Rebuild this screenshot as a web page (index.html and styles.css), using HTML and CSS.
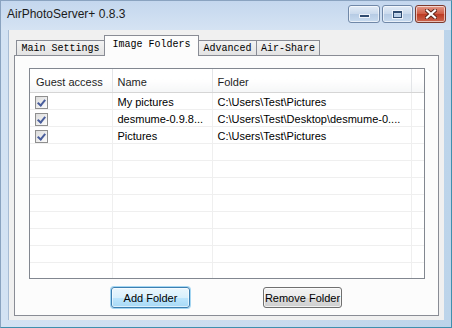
FILE: index.html
```html
<!DOCTYPE html>
<html lang="en">
<head>
<meta charset="utf-8"/>
<title>AirPhotoServer+ 0.8.3</title>
<link rel="stylesheet" href="styles.css">
</head>
<body>
<div class="window">
  <!-- Title bar -->
  <div class="titlebar">
    <span class="title">AirPhotoServer+ 0.8.3</span>
    <div class="caption-buttons">
      <div class="cap-btn cap-min"><span class="min-glyph"></span></div>
      <div class="cap-btn cap-max"><span class="max-glyph"></span></div>
      <div class="cap-btn cap-close">
        <svg width="12" height="10" viewBox="0 0 12 10">
          <path d="M2 1.5 L10 8.5 M10 1.5 L2 8.5" stroke="#5b2418" stroke-width="4" stroke-linecap="square"/>
          <path d="M2 1.5 L10 8.5 M10 1.5 L2 8.5" stroke="#ffffff" stroke-width="2.2" stroke-linecap="square"/>
        </svg>
      </div>
    </div>
  </div>

  <div class="client">
    <!-- Tabs -->
    <div class="tabs">
      <div class="tab tab-main">Main Settings</div>
      <div class="tab tab-images active">Image Folders</div>
      <div class="tab tab-adv">Advanced</div>
      <div class="tab tab-share">Air-Share</div>
    </div>

    <div class="panel">
      <div class="listview">
        <table class="grid">
          <colgroup>
            <col class="c-guest">
            <col class="c-name">
            <col class="c-folder">
            <col class="c-rest">
          </colgroup>
          <thead>
            <tr>
              <th>Guest access</th>
              <th>Name</th>
              <th>Folder</th>
              <th></th>
            </tr>
          </thead>
          <tbody>
            <tr>
              <td><span class="check"></span></td>
              <td>My pictures</td>
              <td>C:\Users\Test\Pictures</td>
              <td></td>
            </tr>
            <tr>
              <td><span class="check"></span></td>
              <td>desmume-0.9.8...</td>
              <td>C:\Users\Test\Desktop\desmume-0....</td>
              <td></td>
            </tr>
            <tr>
              <td><span class="check"></span></td>
              <td>Pictures</td>
              <td>C:\Users\Test\Pictures</td>
              <td></td>
            </tr>
            <tr class="empty"><td></td><td></td><td></td><td></td></tr>
            <tr class="empty"><td></td><td></td><td></td><td></td></tr>
            <tr class="empty"><td></td><td></td><td></td><td></td></tr>
            <tr class="empty"><td></td><td></td><td></td><td></td></tr>
            <tr class="empty"><td></td><td></td><td></td><td></td></tr>
            <tr class="empty"><td></td><td></td><td></td><td></td></tr>
            <tr class="empty"><td></td><td></td><td></td><td></td></tr>
            <tr class="empty"><td></td><td></td><td></td><td></td></tr>
          </tbody>
        </table>
      </div>

      <div class="actions">
        <button class="btn btn-default" type="button">Add Folder</button>
        <button class="btn" type="button">Remove Folder</button>
      </div>
    </div>
  </div>
</div>
</body>
</html>
```

FILE: styles.css
```css
body {
  margin: 0;
  padding: 0;
  width: 452px;
  height: 328px;
  overflow: hidden;
  font-family: "Liberation Sans", Arial, sans-serif;
  font-size: 11px;
  color: #000;
}

.window {
  width: 452px;
  height: 328px;
  box-sizing: border-box;
  border: 1px solid #8aa3c0;
  border-right-color: #3f8fae;
  border-bottom-color: #3f8fae;
  background: linear-gradient(to right, #d3e2f3, #c9dbee 60%, #bcd4ea);
  display: flex;
  flex-direction: column;
}

/* title bar */
.titlebar {
  height: 29px;
  display: flex;
  align-items: flex-start;
  background: linear-gradient(to bottom, #c4d7ee, #d5e3f3);
}

.title {
  font-size: 12px;
  color: #1b1b1b;
  padding: 6px 0 0 6px;
  flex: 1;
}

.caption-buttons {
  display: flex;
  gap: 2px;
  margin: 4px 5px 0 0;
}

.cap-btn {
  height: 18px;
  box-sizing: border-box;
  border: 1px solid #7088a8;
  border-radius: 3px;
  display: flex;
  align-items: center;
  justify-content: center;
  box-shadow: inset 0 0 0 1px rgba(255, 255, 255, 0.6);
}

.cap-min,
.cap-max {
  width: 32px;
  background: linear-gradient(to bottom, #e3ecf7, #c9d9ec 50%, #b6cbe4 51%, #c8dbef);
}

.cap-max {
  width: 31px;
}

.cap-close {
  width: 31px;
  border-color: #7c3a2e;
  background: linear-gradient(to bottom, #e39a8a, #cf5a42 50%, #bd3a22 51%, #cc664f);
}

.min-glyph {
  width: 9px;
  height: 2px;
  margin-top: 4px;
  background: #2f4b70;
  border: 1px solid #eef3fa;
}

.max-glyph {
  width: 7px;
  height: 4px;
  border: 1px solid #2f4b70;
  border-top-width: 2px;
  box-shadow: 0 0 0 1px #eef3fa;
}

/* client area */
.client {
  height: 290px;
  margin: 0 7px 0 7px;
  box-sizing: border-box;
  background: #f0f0f0;
  padding: 5px 0 0 5px;
  border-left: 1px solid #a8bcd4;
}

.tabs {
  height: 20px;
  display: flex;
  align-items: flex-end;
  padding-left: 1px;
  position: relative;
  z-index: 1;
}

.tab {
  box-sizing: border-box;
  height: 15px;
  margin-left: -1px;
  border: 1px solid #898c95;
  border-bottom: none;
  background: linear-gradient(to bottom, #f3f3f3, #e3e3e3);
  font-family: "Liberation Mono", "DejaVu Sans Mono", monospace;
  font-size: 10px;
  line-height: 15px;
  text-align: center;
  color: #000;
}

.tab-main { width: 89px; margin-left: 1px; }
.tab-images { width: 95px; }
.tab-adv { width: 59px; }
.tab-share { width: 64px; }

.tab.active {
  height: 21px;
  margin-bottom: -1px;
  background: #fcfcfc;
  line-height: 18px;
}

.panel {
  width: 425px;
  height: 261px;
  box-sizing: border-box;
  border: 1px solid #898c95;
  background: #fcfcfc;
  padding: 12px 0 0 14px;
}

/* list view */
.listview {
  width: 396px;
  height: 211px;
  box-sizing: border-box;
  border: 1px solid #828790;
  background: #fff;
  overflow: hidden;
}

.grid {
  border-collapse: collapse;
  table-layout: fixed;
  width: 394px;
}

.c-guest { width: 82px; }
.c-name { width: 100px; }
.c-folder { width: 199px; }
.c-rest { width: 13px; }

.grid th {
  height: 21px;
  padding: 2px 0 0 5px;
  text-align: left;
  font-weight: normal;
  color: #1e1e1e;
  background: linear-gradient(to bottom, #ffffff, #ffffff 45%, #f5f6f7);
  border-right: 1px solid #e3e5e8;
  border-bottom: 1px solid #d5d5d5;
  white-space: nowrap;
}

.grid th:first-child {
  padding-left: 6px;
}

.grid th:last-child {
  border-right: none;
}

.grid td {
  height: 14px;
  padding: 2px 0 0 5px;
  border-right: 1px solid #efefef;
  border-bottom: 1px solid #efefef;
  white-space: nowrap;
  overflow: hidden;
  line-height: 14px;
  vertical-align: top;
}

.grid td:last-child {
  border-right: none;
}

.check {
  display: block;
  width: 13px;
  height: 13px;
  margin-top: 1px;
  box-sizing: border-box;
  border: 1px solid #8f8f8f;
  background: linear-gradient(135deg, #dcdcdc, #fdfdfd);
  position: relative;
}

.check::after {
  content: "";
  position: absolute;
  left: 3px;
  top: 1px;
  width: 3px;
  height: 6px;
  border-right: 2px solid #4a5e9c;
  border-bottom: 2px solid #4a5e9c;
  transform: rotate(40deg);
}

/* buttons */
.actions {
  display: flex;
  gap: 73px;
  padding: 8px 0 0 82px;
}

.btn {
  width: 79px;
  height: 21px;
  padding: 0;
  font-family: "Liberation Sans", Arial, sans-serif;
  font-size: 11px;
  color: #000;
  border: 1px solid #707070;
  border-radius: 3px;
  background: linear-gradient(to bottom, #f2f2f2, #ebebeb 50%, #dddddd 51%, #cfcfcf);
  box-shadow: inset 0 0 0 1px rgba(255, 255, 255, 0.7);
}

.btn-default {
  border-color: #3c7fb1;
  background: linear-gradient(to bottom, #eaf6fd, #d9f0fc 50%, #bee6fd 51%, #a7d9f5);
  box-shadow: inset 0 0 0 1px rgba(255, 255, 255, 0.6), 0 0 0 1px #a4d6f2;
}
```
